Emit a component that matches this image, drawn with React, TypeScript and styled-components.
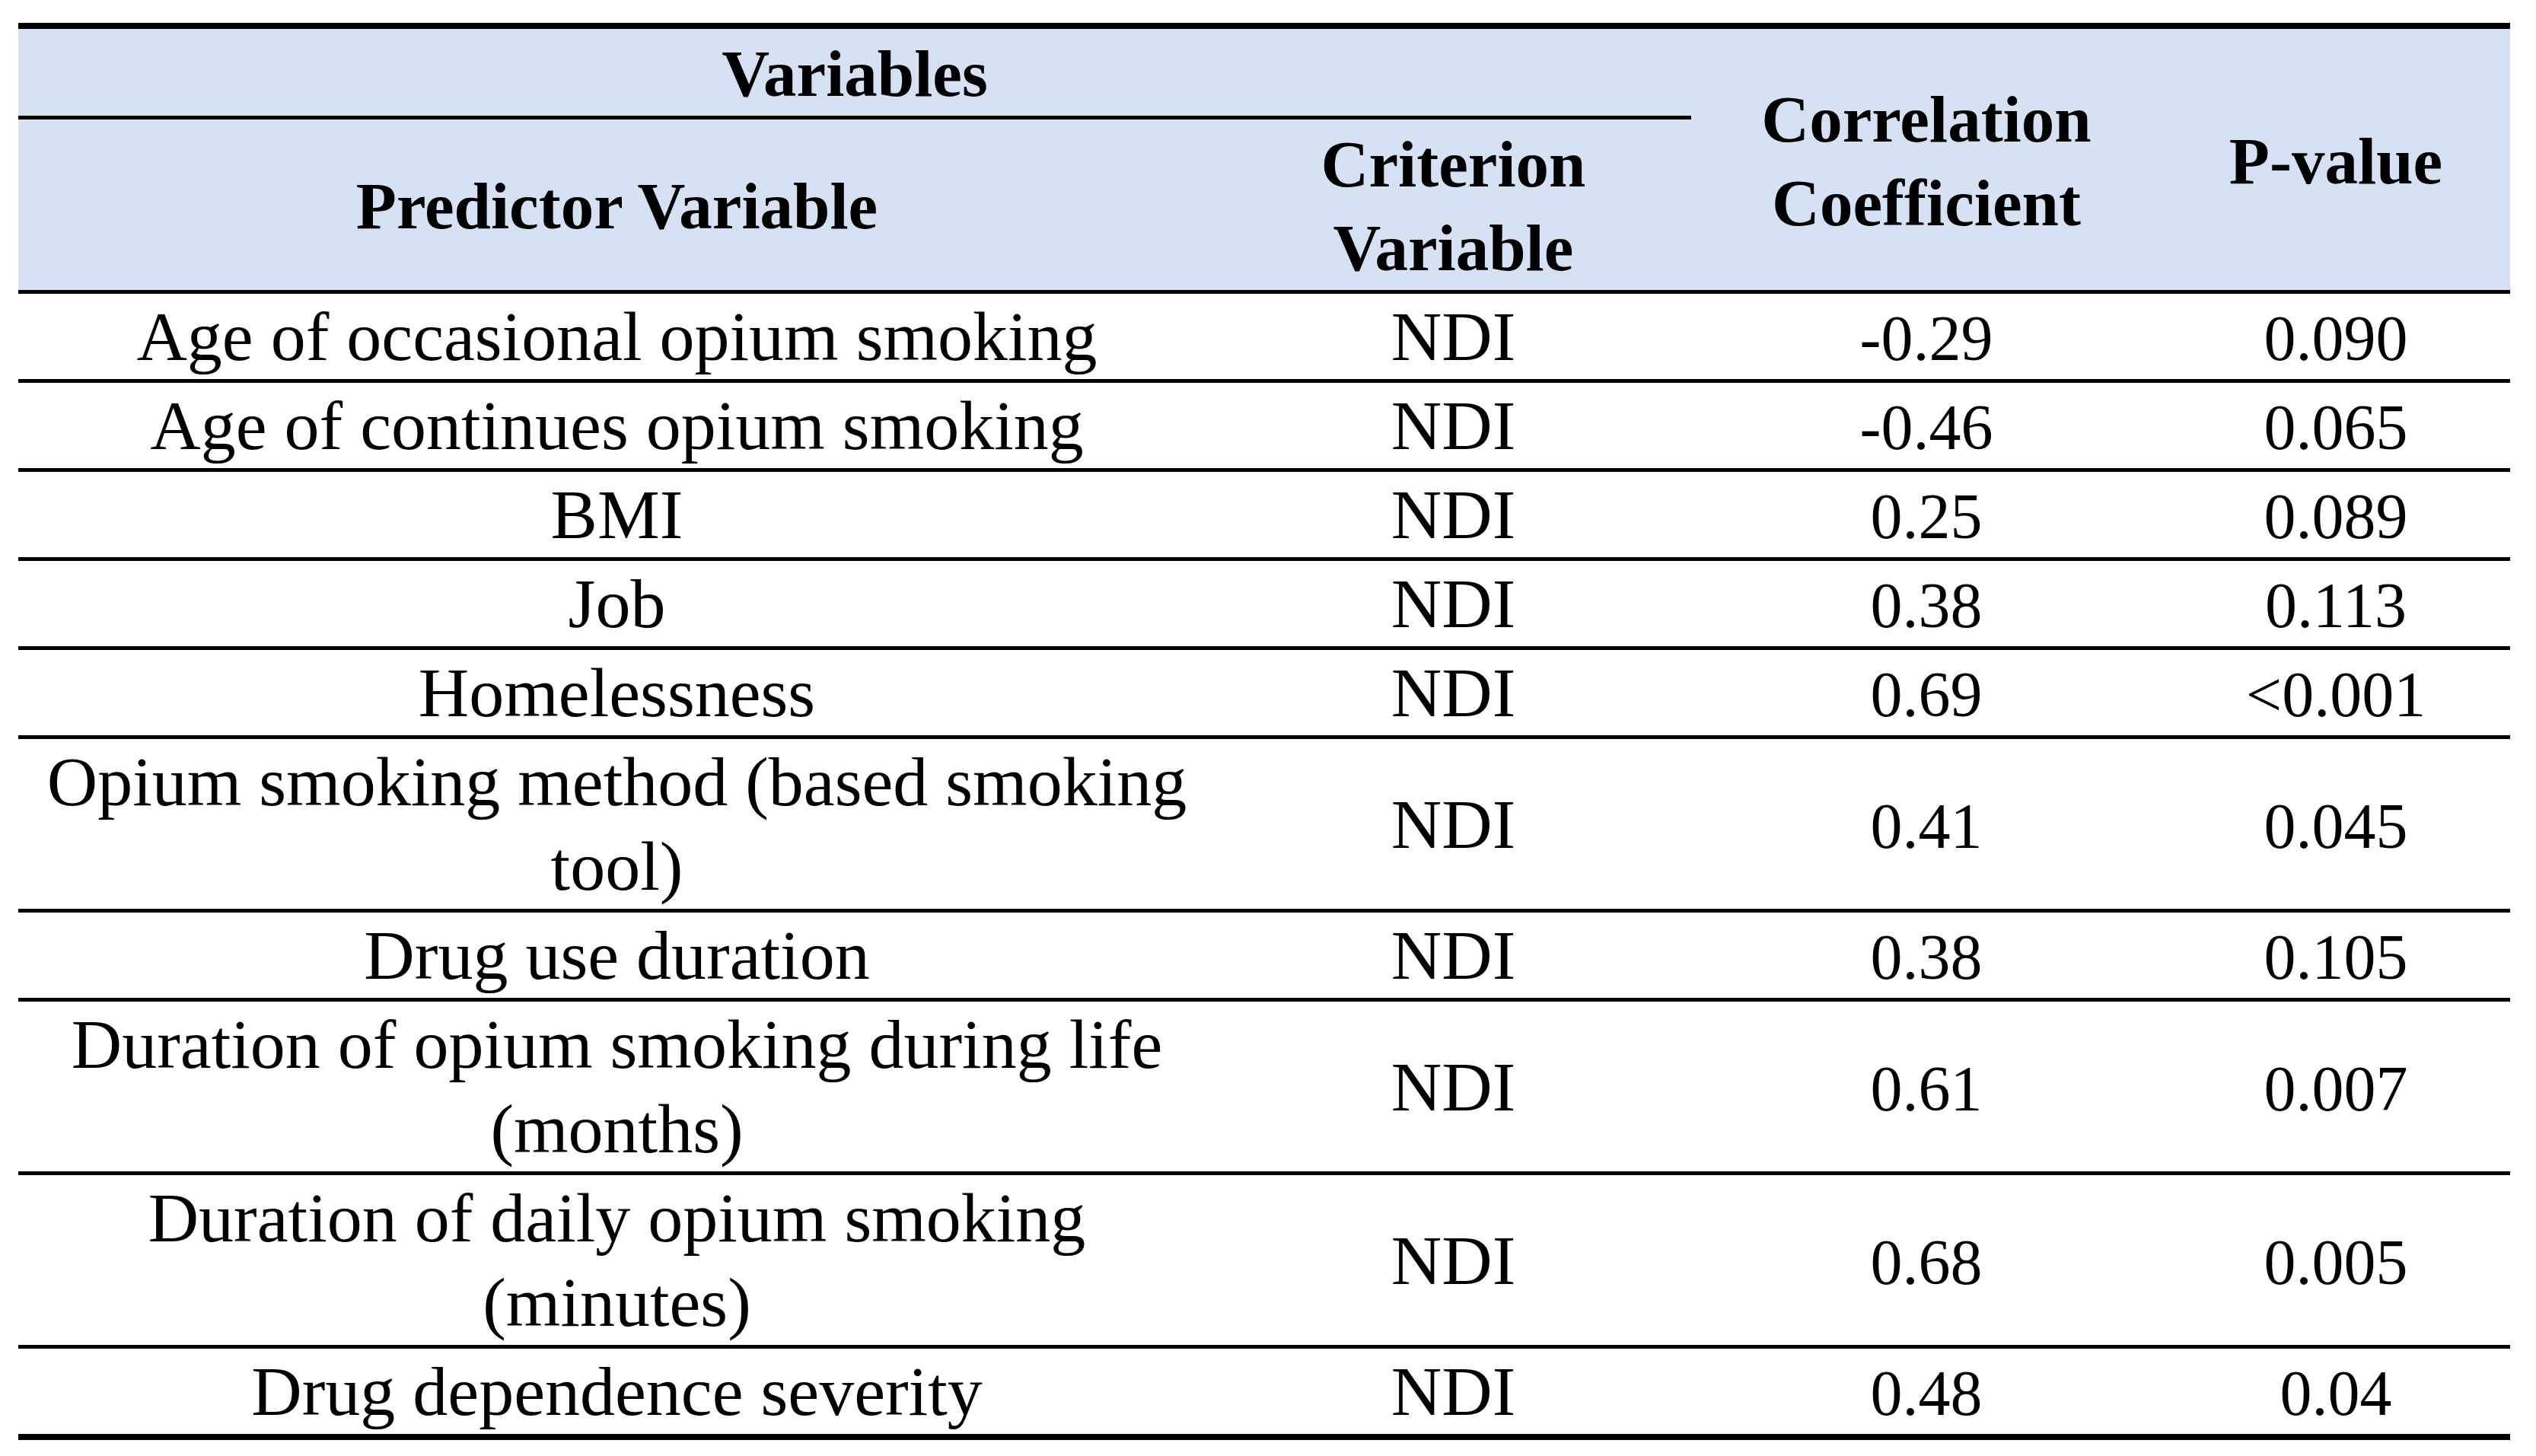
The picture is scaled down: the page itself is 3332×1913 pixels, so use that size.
import React from "react";
import styled, { createGlobalStyle } from "styled-components";

const GlobalStyle = createGlobalStyle`
  body {
    margin: 0;
    background: #fff;
  }
`;

const Table = styled.table`
  margin: 30px 0 0 24px;
  width: 3274px;
  table-layout: fixed;
  border-collapse: separate;
  border-spacing: 0;
  font-family: "Liberation Serif", "Times New Roman", serif;
  color: #000;
`;

const HeadCell = styled.th<{ $top?: boolean }>`
  padding: 4px 8px 0;
  background: #d6e2f3;
  font-size: 87px;
  font-weight: 700;
  line-height: 110px;
  text-align: center;
  vertical-align: middle;
  border-top: ${(p) => (p.$top ? "8px solid #000" : "none")};
  border-bottom: 5px solid #000;
`;

const Cell = styled.td<{ $num?: boolean; $last?: boolean }>`
  padding: ${(p) => (p.$num ? "6px 8px 0" : "1px 8px 0")};
  font-size: ${(p) => (p.$num ? "84px" : "92px")};
  font-weight: 400;
  line-height: ${(p) => (p.$num ? "106px" : "111px")};
  text-align: center;
  vertical-align: middle;
  border-bottom: ${(p) => (p.$last ? "8px" : "5px")} solid #000;
`;

type Row = { predictor: string[]; criterion: string; r: string; p: string };

const rows: Row[] = [
  { predictor: ["Age of occasional opium smoking"], criterion: "NDI", r: "-0.29", p: "0.090" },
  { predictor: ["Age of continues opium smoking"], criterion: "NDI", r: "-0.46", p: "0.065" },
  { predictor: ["BMI"], criterion: "NDI", r: "0.25", p: "0.089" },
  { predictor: ["Job"], criterion: "NDI", r: "0.38", p: "0.113" },
  { predictor: ["Homelessness"], criterion: "NDI", r: "0.69", p: "<0.001" },
  { predictor: ["Opium smoking method (based smoking", "tool)"], criterion: "NDI", r: "0.41", p: "0.045" },
  { predictor: ["Drug use duration"], criterion: "NDI", r: "0.38", p: "0.105" },
  { predictor: ["Duration of opium smoking during life", "(months)"], criterion: "NDI", r: "0.61", p: "0.007" },
  { predictor: ["Duration of daily opium smoking", "(minutes)"], criterion: "NDI", r: "0.68", p: "0.005" },
  { predictor: ["Drug dependence severity"], criterion: "NDI", r: "0.48", p: "0.04" },
];

function Lines({ lines }: { lines: string[] }) {
  return (
    <>
      {lines.map((l, i) => (
        <React.Fragment key={i}>
          {i > 0 && <br />}
          {l}
        </React.Fragment>
      ))}
    </>
  );
}

export default function App() {
  return (
    <>
      <GlobalStyle />
      <Table>
        <colgroup>
          <col style={{ width: 1573 }} />
          <col style={{ width: 625 }} />
          <col style={{ width: 618 }} />
          <col style={{ width: 458 }} />
        </colgroup>
        <thead>
          <tr>
            <HeadCell $top colSpan={2}>
              Variables
            </HeadCell>
            <HeadCell $top rowSpan={2}>
              Correlation
              <br />
              Coefficient
            </HeadCell>
            <HeadCell $top rowSpan={2}>
              P-value
            </HeadCell>
          </tr>
          <tr>
            <HeadCell>Predictor Variable</HeadCell>
            <HeadCell>
              Criterion
              <br />
              Variable
            </HeadCell>
          </tr>
        </thead>
        <tbody>
          {rows.map((row, i) => {
            const last = i === rows.length - 1;
            return (
              <tr key={i}>
                <Cell $last={last}>
                  <Lines lines={row.predictor} />
                </Cell>
                <Cell $last={last}>{row.criterion}</Cell>
                <Cell $num $last={last}>
                  {row.r}
                </Cell>
                <Cell $num $last={last}>
                  {row.p}
                </Cell>
              </tr>
            );
          })}
        </tbody>
      </Table>
    </>
  );
}
